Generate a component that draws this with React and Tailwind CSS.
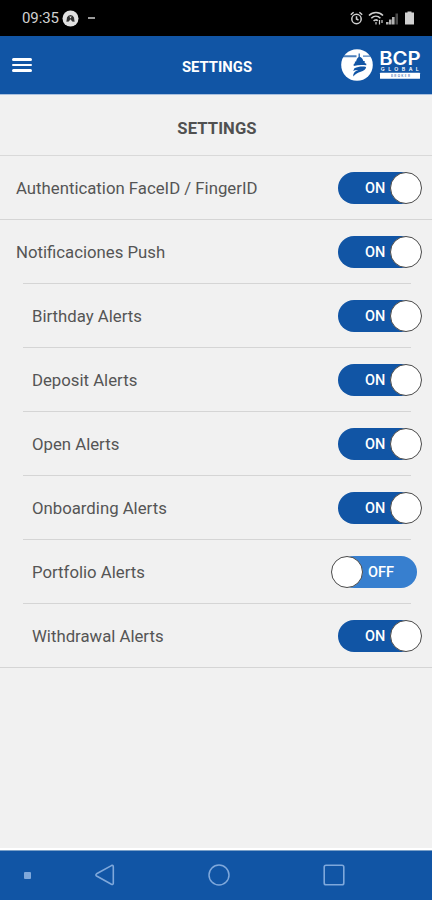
import React, { useState } from 'react';

const ITEMS = [
    { id: 'auth', label: 'Authentication FaceID / FingerID', on: true },
    { id: 'push', label: 'Notificaciones Push', on: true },
    { id: 'birthday', label: 'Birthday Alerts', on: true, nested: true },
    { id: 'deposit', label: 'Deposit Alerts', on: true, nested: true },
    { id: 'open', label: 'Open Alerts', on: true, nested: true },
    { id: 'onboarding', label: 'Onboarding Alerts', on: true, nested: true },
    { id: 'portfolio', label: 'Portfolio Alerts', on: false, nested: true },
    { id: 'withdrawal', label: 'Withdrawal Alerts', on: true, nested: true },
];

const StatusBar = () => (
    <div className="flex h-[36px] shrink-0 items-center justify-between bg-black pl-[22px] pr-[18px] text-[#d0d0d0]">
        <div className="flex items-center">
            <span className="text-[15px] leading-none tracking-[-0.1px]">09:35</span>
            <svg className="ml-[3px]" width="17" height="17" viewBox="0 0 17 17">
                <circle cx="8.5" cy="8.5" r="8" fill="#e2e2e2" />
                <path d="M4.4 11.8 5 7.4a3.7 3.7 0 0 1 7 0l.6 4.4-2.4-.4-1.7-2.2-1.7 2.2z" fill="#333" />
                <path d="M7.3 6.6h2.4L8.5 8.4z" fill="#e2e2e2" />
            </svg>
            <span className="ml-[9px] h-[1.5px] w-[7px] bg-[#9a9a9a]" />
        </div>
        <div className="flex items-center">
            <svg width="13" height="14" viewBox="0 0 13 14" fill="none" stroke="currentColor" strokeWidth="1.5">
                <circle cx="6.5" cy="8" r="4.7" />
                <path d="M6.5 5.2V8l2 1M.8 3.8l2.8-2.5M12.2 3.8 9.4 1.3" />
            </svg>
            <svg className="ml-[5px]" width="16" height="14" viewBox="0 0 16 14" fill="none" stroke="currentColor" strokeWidth="1.6">
                <path d="M1 4.5c4-4 10-4 14 0M3.3 7.3c2.7-2.7 6.4-2.7 9.1 0M5.6 10c1.4-1.4 3-1.4 4.2-.2" />
                <path d="M8 11v2.5M11.5 9v4.5M14 9v3" strokeWidth="1.2" />
            </svg>
            <svg className="ml-[2px]" width="13" height="13" viewBox="0 0 13 13" fill="currentColor">
                <path d="M0 12.5V10h2.6v2.5zM3 12.5V7.5h2.6v5zM6 12.5V5h2.6v7.5z" opacity=".85" />
                <path d="M9.5 12.5V1.5H12v11z" opacity=".35" />
            </svg>
            <svg className="ml-[6px]" width="9" height="14" viewBox="0 0 9 14" fill="currentColor">
                <path d="M0 1.5h2.5V.5h4v1H9v12H0z" />
            </svg>
        </div>
    </div>
);

const Logo = () => (
    <div className="flex items-center">
        <svg width="32" height="32" viewBox="0 0 32 32">
            <circle cx="16" cy="16" r="15.8" fill="#fff" />
            <path d="M1.5 6.3h14v1.9H1zM22 6.5h7.5v1.2H22z" fill="#1155a5" opacity=".75" />
            <path d="M17.6 4.5h1.2v3.2c2 .7 3.2 2.2 3.5 4.4h1.4v2l1.6.6v1.6c-4.4-.7-8.2-.5-12.6.6v-1.8l1.2-.8v-1.8h1.2c.3-2.4 1.4-3.9 2.5-4.6z" fill="#1155a5" />
            <path d="M13.4 19.2c3.8-1.5 7.8-2 11.7-1.2-.2 2.6-2.6 4-5.4 4.8-3 .9-5 2.2-7.5 4.8-.3-3.4 1.6-5.4 5-6.5-1.7-.2-3.4.1-5 .9z" fill="#1155a5" />
        </svg>
        <svg className="ml-[7px] overflow-visible" width="40" height="29" viewBox="0 0 40 29" fill="#fff" fontFamily="Inter, sans-serif">
            <text x="-.8" y="14" fontSize="18" fontWeight="600" textLength="41.5" lengthAdjust="spacingAndGlyphs">BCP</text>
            <text x=".8" y="20" fontSize="5.2" fontWeight="600" textLength="38">GLOBAL</text>
            <rect x="0" y="21.7" width="40" height="6" rx=".5" />
            <text x="11" y="25.8" fontSize="3" fontWeight="600" fill="#1155a5" textLength="19" opacity=".8">BROKER</text>
        </svg>
    </div>
);

const Header = () => (
    <header className="grid h-[59px] shrink-0 grid-cols-3 items-center border-b border-[#a9c0de] bg-[#1155a5] pl-[12px] pr-[12px]">
        <button aria-label="Menu" className="flex w-[20px] flex-col gap-[3px]">
            <span className="h-[2.5px] w-full rounded-full bg-white" />
            <span className="h-[2.5px] w-full rounded-full bg-white" />
            <span className="h-[2.5px] w-full rounded-full bg-white" />
        </button>
        <h1 className="pt-[4px] pl-[2px] text-center text-[14.8px] font-bold text-white">SETTINGS</h1>
        <div className="flex justify-end">
            <Logo />
        </div>
    </header>
);

const Toggle = ({ on, onClick }) => (
    <button
        role="switch"
        aria-checked={on}
        onClick={onClick}
        className={`relative flex h-[32px] w-[79px] items-center rounded-full pt-[2px] text-[14.5px] font-medium text-white ${
            on ? 'bg-[#1155a5] pl-[27px]' : 'bg-[#377fcf] pl-[30px]'
        }`}
    >
        {on ? 'ON' : 'OFF'}
        <span
            className={`absolute top-0 h-[32px] w-[32px] rounded-full border border-[#4a4a4a] bg-white ${
                on ? 'right-[-5px]' : 'left-[-7px]'
            }`}
        />
    </button>
);

const SettingRow = ({ item, last, onToggle }) => {
    const inset = item.nested || item.id === 'push';

    return (
        <li className="relative flex h-[64.05px] items-center justify-between pb-px pr-[15px]">
            <span className={`pt-[2px] text-[16.75px] text-[#555] ${item.nested ? 'pl-[32px]' : 'pl-[16px]'}`}>
                {item.label}
            </span>
            <Toggle on={item.on} onClick={() => onToggle(item.id)} />
            <span
                className={`absolute bottom-0 h-px bg-[#d5d5d5] ${
                    inset && !last ? 'left-[23px] right-[21px]' : 'left-0 right-0'
                }`}
            />
        </li>
    );
};

const NavBar = () => (
    <nav className="flex h-[50px] shrink-0 items-center border-t border-[#7ba0c8] bg-[#1155a5] pb-px pl-[24px] text-[#7fa8db]">
        <span className="h-[7px] w-[7px] rounded-[1px] bg-current" />
        <svg className="ml-[63px]" width="22" height="22" viewBox="0 0 22 22" fill="none" stroke="currentColor" strokeWidth="1.6" strokeLinejoin="round">
            <path d="M17.4 1.6 2.6 9.8c-.9.6-.9 1.6 0 2.2l14.8 8.3c1.1.5 1.9 0 1.9-1.1V2.7c0-1.1-.8-1.6-1.9-1.1z" />
        </svg>
        <svg className="ml-[92px]" width="22" height="22" viewBox="0 0 22 22" fill="none" stroke="currentColor" strokeWidth="1.5">
            <circle cx="11" cy="11" r="10" />
        </svg>
        <svg className="ml-[93px]" width="22" height="22" viewBox="0 0 22 22" fill="none" stroke="currentColor" strokeWidth="1.6">
            <rect x="1.2" y="1.2" width="19.6" height="19.6" rx="1.8" />
        </svg>
    </nav>
);

const App = () => {
    const [items, setItems] = useState(ITEMS);

    const handleToggle = (id) => {
        setItems(prev => prev.map(item => (item.id === id ? { ...item, on: !item.on } : item)));
    };

    return (
        <div className="flex h-screen w-full flex-col overflow-hidden bg-[#f1f1f1] font-['Roboto',sans-serif]">
            <StatusBar />
            <Header />
            <main className="flex-1 border-b-2 border-white">
                <h2 className="flex h-[61px] items-center justify-center border-b border-[#d9d9d9] pl-[2px] pt-[9px] text-[16.6px] font-bold tracking-[0.1px] text-[#505050]">
                    SETTINGS
                </h2>
                <ul>
                    {items.map((item, i) => (
                        <SettingRow
                            key={item.id}
                            item={item}
                            last={i === items.length - 1}
                            onToggle={handleToggle}
                        />
                    ))}
                </ul>
            </main>
            <NavBar />
        </div>
    );
};

export default App;
